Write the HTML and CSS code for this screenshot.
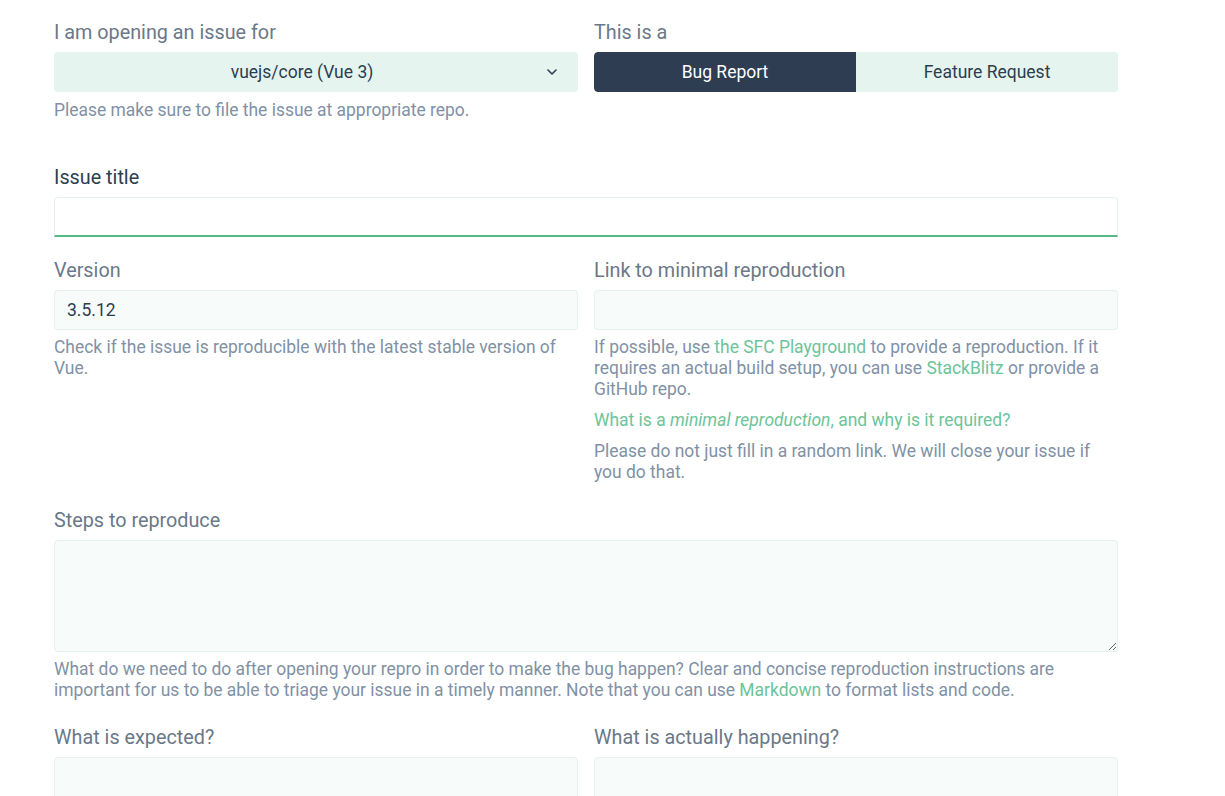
FILE: index.html
```html
<!DOCTYPE html>
<html lang="en">
<head>
<meta charset="utf-8">
<title>Vue Issue Helper</title>
<link rel="stylesheet" href="styles.css">
</head>
<body>
<main class="form">
  <div class="row first">
    <div class="field">
      <label class="label">I am opening an issue for</label>
      <div class="select">
        <span class="select-text">vuejs/core (Vue 3)</span>
        <svg class="chevron" width="10" height="6" viewBox="0 0 10 6"><path d="M1 1l4 4 4-4" fill="none" stroke="#2c3e50" stroke-width="1.6" stroke-linecap="round" stroke-linejoin="round"/></svg>
      </div>
      <p class="help">Please make sure to file the issue at appropriate repo.</p>
    </div>
    <div class="field">
      <label class="label">This is a</label>
      <div class="toggle">
        <button class="toggle-btn active">Bug Report</button>
        <button class="toggle-btn">Feature Request</button>
      </div>
    </div>
  </div>

  <div class="field wide title-field">
    <label class="label focused">Issue title</label>
    <input class="input title-input" type="text">
  </div>

  <div class="row version-row">
    <div class="field">
      <label class="label">Version</label>
      <input class="input" type="text" value="3.5.12">
      <p class="help">Check if the issue is reproducible with the latest stable version of Vue.</p>
    </div>
    <div class="field">
      <label class="label">Link to minimal reproduction</label>
      <input class="input" type="text">
      <p class="help">If possible, use <a class="link">the SFC Playground</a> to provide a reproduction. If it requires an actual build setup, you can use <a class="link">StackBlitz</a> or provide a GitHub repo.</p>
      <p class="help para"><a class="link">What is a <em>minimal reproduction</em>, and why is it required?</a></p>
      <p class="help para">Please do not just fill in a random link. We will close your issue if you do that.</p>
    </div>
  </div>

  <div class="field wide steps-field">
    <label class="label">Steps to reproduce</label>
    <textarea class="input textarea"></textarea>
    <p class="help">What do we need to do after opening your repro in order to make the bug happen? Clear and concise reproduction instructions are important for us to be able to triage your issue in a timely manner. Note that you can use <a class="link">Markdown</a> to format lists and code.</p>
  </div>

  <div class="row last-row">
    <div class="field">
      <label class="label">What is expected?</label>
      <textarea class="input textarea"></textarea>
    </div>
    <div class="field">
      <label class="label">What is actually happening?</label>
      <textarea class="input textarea"></textarea>
    </div>
  </div>
</main>
</body>
</html>
```

FILE: styles.css
```css
* { box-sizing: border-box; }
html, body { margin: 0; padding: 0; background: #ffffff; }
body {
  font-family: Roboto, "Liberation Sans", sans-serif;
  color: #2c3e50;
  overflow: hidden;
}
.form {
  width: 1064px;
  margin-left: 54px;
  padding-top: 21px;
}
.row {
  display: grid;
  grid-template-columns: 1fr 1fr;
  column-gap: 16px;
}
.row.first { margin-bottom: 45px; }
.row.first .help { margin-top: 8px; }
.title-field { margin-bottom: 22px; }
.version-row { margin-bottom: 26px; }
.steps-field { margin-bottom: 25px; }
.label {
  display: block;
  font-size: 19.8px;
  line-height: 24px;
  color: #6b7888;
  margin-bottom: 7px;
}
.label.focused { color: #2c3e50; }
.select {
  height: 40px;
  background: #e5f4ee;
  border-radius: 4px;
  display: flex;
  align-items: center;
  justify-content: center;
  padding-right: 28px;
  position: relative;
  font-size: 17.5px;
  color: #2c3e50;
}
.chevron {
  position: absolute;
  right: 21px;
  top: 17px;
}
.toggle {
  display: flex;
  height: 40px;
  border-radius: 4px;
  overflow: hidden;
  background: #e5f4ee;
}
.toggle-btn {
  flex: 1;
  border: 0;
  margin: 0;
  background: #e5f4ee;
  color: #2c3e50;
  font-family: Roboto, "Liberation Sans", sans-serif;
  font-size: 17.5px;
  cursor: pointer;
}
.toggle-btn.active {
  background: #2e3d51;
  color: #ffffff;
  border-radius: 4px 0 0 4px;
}
.help {
  margin: 7px 0 0;
  font-size: 17.45px;
  line-height: 21px;
  color: #8191a5;
}
.help.para { margin-top: 10px; }
.link {
  color: #6cc49a;
  text-decoration: none;
}
.input {
  display: block;
  width: 100%;
  height: 40px;
  background: #f7fbfa;
  border: 1px solid #e4f1ec;
  border-radius: 4px;
  padding: 0 12px;
  font-family: Roboto, "Liberation Sans", sans-serif;
  font-size: 17.5px;
  color: #2c3e50;
  outline: none;
}
.title-input {
  background: #ffffff;
  border-color: #e6f1ed;
  border-bottom: 2px solid #58b987;
  border-radius: 4px 4px 0 0;
}
.textarea {
  height: 112px;
  resize: vertical;
  padding: 8px 12px;
}
```
